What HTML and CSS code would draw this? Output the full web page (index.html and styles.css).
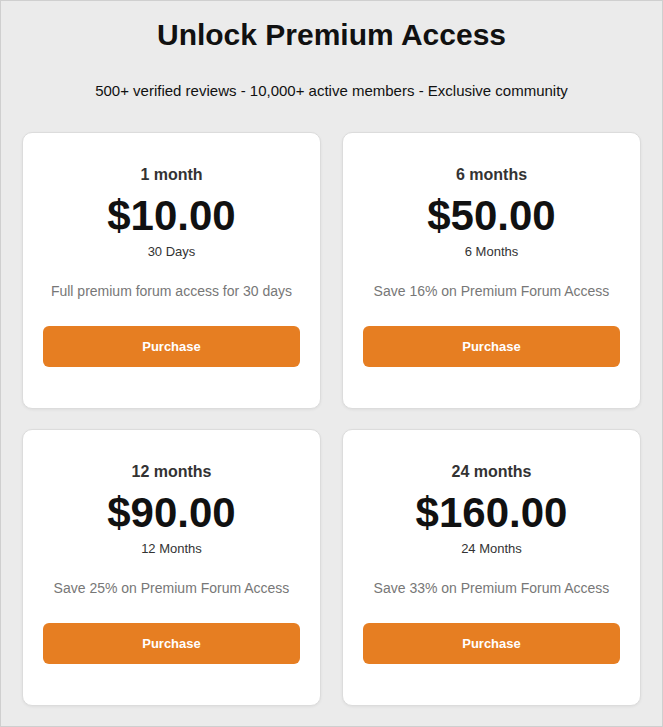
FILE: index.html
```html
<!DOCTYPE html>
<html>
<head>
<meta charset="utf-8">
<link rel="stylesheet" href="styles.css">
</head>
<body>
<div class="page">
  <h1 class="title">Unlock Premium Access</h1>
  <p class="subtitle">500+ verified reviews - 10,000+ active members - Exclusive community</p>
  <div class="grid">
    <div class="card">
      <h3 class="plan">1 month</h3>
      <div class="price">$10.00</div>
      <div class="period">30 Days</div>
      <p class="desc">Full premium forum access for 30 days</p>
      <button class="btn">Purchase</button>
    </div>
    <div class="card">
      <h3 class="plan">6 months</h3>
      <div class="price">$50.00</div>
      <div class="period">6 Months</div>
      <p class="desc">Save 16% on Premium Forum Access</p>
      <button class="btn">Purchase</button>
    </div>
    <div class="card">
      <h3 class="plan">12 months</h3>
      <div class="price">$90.00</div>
      <div class="period">12 Months</div>
      <p class="desc">Save 25% on Premium Forum Access</p>
      <button class="btn">Purchase</button>
    </div>
    <div class="card">
      <h3 class="plan">24 months</h3>
      <div class="price">$160.00</div>
      <div class="period">24 Months</div>
      <p class="desc">Save 33% on Premium Forum Access</p>
      <button class="btn">Purchase</button>
    </div>
  </div>
</div>
</body>
</html>
```
FILE: styles.css
```css
html, body {
  margin: 0;
  padding: 0;
}
body {
  background: #ebebeb;
  font-family: "Liberation Sans", Arial, sans-serif;
  color: #111;
}
.page {
  box-sizing: border-box;
  width: 663px;
  height: 727px;
  border: 1px solid #cfcfcf;
  padding: 16px 21px 0 21px;
}
.title {
  margin: 0;
  font-size: 30px;
  line-height: 36px;
  font-weight: bold;
  text-align: center;
  color: #111;
}
.subtitle {
  margin: 28px 0 0 0;
  font-size: 15px;
  line-height: 20px;
  text-align: center;
  color: #111;
}
.grid {
  margin-top: 31px;
  display: grid;
  grid-template-columns: 1fr 1fr;
  column-gap: 21px;
  row-gap: 20px;
}
.card {
  background: #fff;
  border: 1px solid #dcdcdc;
  border-radius: 10px;
  box-shadow: 0 1px 3px rgba(0,0,0,0.06);
  padding: 32px 20px 41px 20px;
  display: flex;
  flex-direction: column;
  align-items: center;
  text-align: center;
}
.plan {
  margin: 0;
  font-size: 16px;
  line-height: 20px;
  font-weight: bold;
  color: #333;
}
.price {
  margin-top: 7px;
  font-size: 42px;
  line-height: 48px;
  font-weight: bold;
  color: #111;
}
.period {
  margin-top: 3px;
  font-size: 13px;
  line-height: 18px;
  color: #333;
}
.desc {
  margin: 20px 0 0 0;
  font-size: 14px;
  line-height: 20px;
  color: #777;
}
.btn {
  margin-top: 25px;
  width: 100%;
  height: 41px;
  border: none;
  border-radius: 6px;
  background: #e67e22;
  color: #fff;
  font-family: "Liberation Sans", Arial, sans-serif;
  font-size: 13px;
  font-weight: bold;
  cursor: pointer;
}
```
